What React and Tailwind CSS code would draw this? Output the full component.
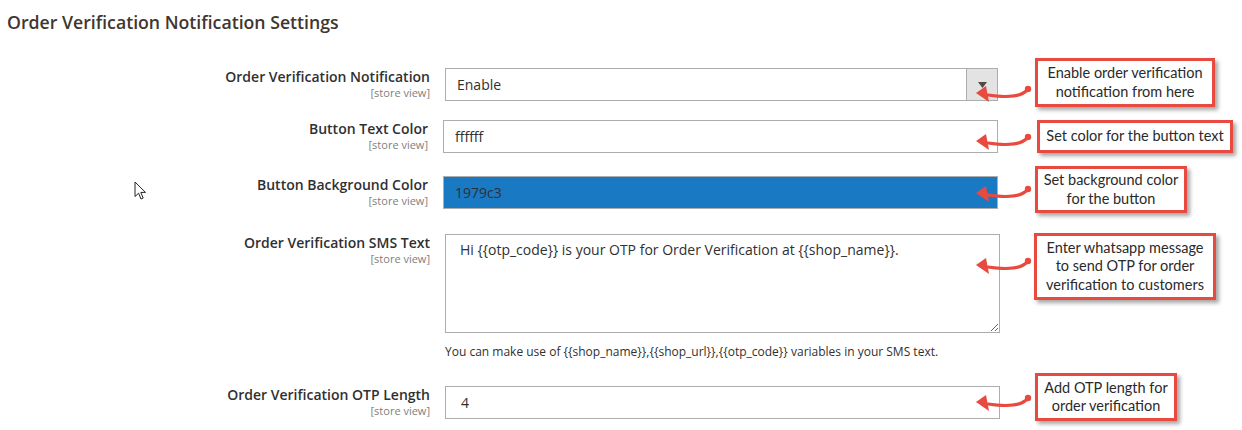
import React from 'react';

// callout arrow: dot on the box edge, curved tail, head pointing into the field
function Arrow({ top }) {
  return (
    <svg className="absolute left-[973px]" style={{ top }} width="60" height="26" viewBox="0 0 60 26">
      <path d="M55 10 C 49 18, 36 19, 15 16" fill="none" stroke="#e84a3f" strokeWidth="3" strokeLinecap="round" />
      <circle cx="55" cy="10" r="3.2" fill="#e84a3f" />
      <polygon points="3,14 13,7 16,23" fill="#e84a3f" />
    </svg>
  );
}

function Callout({ left, top, width, height, children }) {
  return (
    <div
      className="absolute flex items-center justify-center text-center whitespace-nowrap bg-white border-[3px] border-[#e84a3f] shadow-[3px_3px_4px_rgba(0,0,0,0.35)] text-[14.5px] leading-[18.5px] font-normal text-[#2a2a2a] font-['Lato',sans-serif]"
      style={{ left, top, width, height }}
    >
      <div>{children}</div>
    </div>
  );
}

function Label({ width, text }) {
  return (
    <div className="shrink-0 text-right" style={{ width }}>
      <div className="text-[14px] leading-[18px] font-semibold text-[#303030]">{text}</div>
      <div className="text-[11px] leading-[13px] text-[#808080]">[store view]</div>
    </div>
  );
}

const inputCls = "h-[33px] border border-[#adadad] bg-white text-[14px] text-[#303030] font-['Open_Sans',sans-serif] outline-none";

export default function App() {
  return (
    <div className="relative w-[1242px] h-[430px] overflow-hidden bg-white font-['Open_Sans',sans-serif] text-[#303030]">
      <div className="pl-[7px] pt-[10px] text-[17.7px] leading-[24px] font-semibold text-[#41362f]">
        Order Verification Notification Settings
      </div>

      {/* Order Verification Notification */}
      <div className="relative flex items-start mt-[34px]">
        <Label width="430px" text="Order Verification Notification" />
        <div className={`ml-[15px] w-[553px] flex ${inputCls}`}>
          <div className="flex-1 pl-[11px] leading-[31px]">Enable</div>
          <div className="w-[31px] border-l border-[#adadad] bg-[#e3e3e3] flex items-center justify-center">
            <svg width="9" height="6" viewBox="0 0 9 6"><polygon points="0,0 9,0 4.5,6" fill="#514943" /></svg>
          </div>
        </div>
        <Arrow top="11px" />
        <Callout left="1035px" top="-10px" width="180px" height="49px">
          Enable order verification<br />notification from here
        </Callout>
      </div>

      {/* Button Text Color */}
      <div className="relative flex items-start mt-[19px]">
        <Label width="428px" text="Button Text Color" />
        <input readOnly value="ffffff" className={`ml-[15px] w-[555px] pl-[11px] ${inputCls}`} />
        <Arrow top="7px" />
        <Callout left="1037px" top="0px" width="196px" height="33px">
          Set color for the button text
        </Callout>
      </div>

      {/* Button Background Color */}
      <div className="relative flex items-start mt-[23px]">
        <Label width="428px" text="Button Background Color" />
        <input readOnly value="1979c3" className={`ml-[15px] w-[555px] pl-[11px] ${inputCls} !bg-[#1979c3]`} />
        <Arrow top="3px" />
        <Callout left="1035px" top="-10px" width="152px" height="47px">
          Set background color<br />for the button
        </Callout>
      </div>

      {/* Order Verification SMS Text */}
      <div className="relative flex items-start mt-[25px]">
        <Label width="430px" text="Order Verification SMS Text" />
        <div className="ml-[15px] w-[555px]">
          <textarea
            readOnly
            defaultValue="Hi {{otp_code}} is your OTP for Order Verification at {{shop_name}}."
            className="block w-[555px] h-[99px] border border-[#adadad] bg-white pl-[14px] pt-[5px] text-[14px] leading-[20px] text-[#303030] font-['Open_Sans',sans-serif] outline-none resize"
          />
          <div className="mt-[11px] text-[12px] leading-[16px] text-[#303030]">
            {'You can make use of {{shop_name}},{{shop_url}},{{otp_code}} variables in your SMS text.'}
          </div>
        </div>
        <Arrow top="17px" />
        <Callout left="1034px" top="-1px" width="182px" height="67px">
          Enter whatsapp message<br />to send OTP for order<br />verification to customers
        </Callout>
      </div>

      {/* Order Verification OTP Length */}
      <div className="relative flex items-start mt-[26px]">
        <Label width="430px" text="Order Verification OTP Length" />
        <input readOnly value="4" className={`ml-[15px] w-[555px] pl-[15px] ${inputCls}`} />
        <Arrow top="2px" />
        <Callout left="1035px" top="-13px" width="142px" height="48px">
          Add OTP length for<br />order verification
        </Callout>
      </div>

      {/* mouse pointer */}
      <svg className="absolute left-[134px] top-[181px]" width="13" height="20" viewBox="0 0 13 20">
        <path d="M1 1 L1 15.5 L4.6 12.2 L7 18 L9.2 17 L6.8 11.4 L11.5 11.4 Z" fill="#fff" stroke="#222" strokeWidth="1" strokeLinejoin="round" />
      </svg>
    </div>
  );
}
